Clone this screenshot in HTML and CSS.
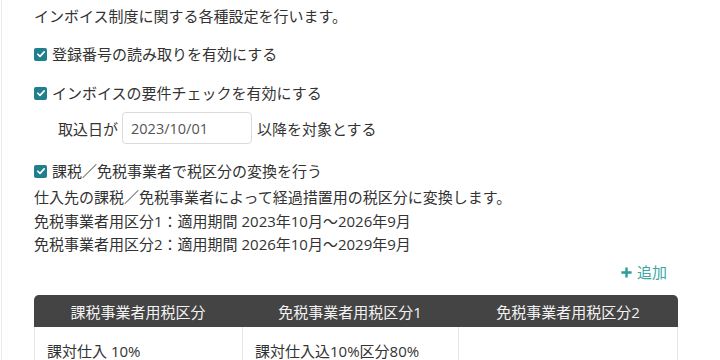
FILE: index.html
```html
<!DOCTYPE html>
<html lang="ja">
<head>
  <meta charset="UTF-8" />
  <meta name="viewport" content="width=device-width, initial-scale=1.0"/>
  <title>インボイス設定</title>
  <link rel="stylesheet" href="styles.css">
</head>
<body>
  <div class="panel">
    <p class="intro">インボイス制度に関する各種設定を行います。</p>

    <label class="check-row first">
      <span class="check"><svg viewBox="0 0 12 12" width="10" height="10"><path d="M2.2 6.3 L4.8 8.8 L9.8 3.4" fill="none" stroke="#fff" stroke-width="2" stroke-linecap="round" stroke-linejoin="round"/></svg></span>
      登録番号の読み取りを有効にする
    </label>

    <label class="check-row">
      <span class="check"><svg viewBox="0 0 12 12" width="10" height="10"><path d="M2.2 6.3 L4.8 8.8 L9.8 3.4" fill="none" stroke="#fff" stroke-width="2" stroke-linecap="round" stroke-linejoin="round"/></svg></span>
      インボイスの要件チェックを有効にする
    </label>

    <div class="date-row">
      <span>取込日が</span>
      <input class="date-input" type="text" value="2023/10/01">
      <span>以降を対象とする</span>
    </div>

    <label class="check-row convert">
      <span class="check"><svg viewBox="0 0 12 12" width="10" height="10"><path d="M2.2 6.3 L4.8 8.8 L9.8 3.4" fill="none" stroke="#fff" stroke-width="2" stroke-linecap="round" stroke-linejoin="round"/></svg></span>
      課税／免税事業者で税区分の変換を行う
    </label>
    <p class="desc">仕入先の課税／免税事業者によって経過措置用の税区分に変換します。</p>
    <p class="period first">免税事業者用区分1：適用期間 2023年10月～2026年9月</p>
    <p class="period">免税事業者用区分2：適用期間 2026年10月～2029年9月</p>

    <div class="add-row">
      <button class="add-btn"><svg viewBox="0 0 14 14" width="13" height="13"><path d="M7 1.5 V12.5 M1.5 7 H12.5" stroke="#2a9d9a" stroke-width="2.6"/></svg>追加</button>
    </div>

    <table class="tax-table">
      <thead>
        <tr>
          <th class="c1">課税事業者用税区分</th>
          <th class="c2">免税事業者用税区分1</th>
          <th class="c3">免税事業者用税区分2</th>
        </tr>
      </thead>
      <tbody>
        <tr>
          <td>課対仕入 10%</td>
          <td>課対仕入込10%区分80%</td>
          <td></td>
        </tr>
      </tbody>
    </table>
  </div>
</body>
</html>
```

FILE: styles.css
```css
body {
  margin: 0;
  background: #fff;
  color: #333;
  font-family: "Open Sans", "Noto Sans CJK JP", sans-serif;
  font-size: 15px;
}
.panel {
  border-left: 1px solid #ececec;
  margin-left: 1px;
  padding: 5px 0 0 32px;
  height: 355px;
  overflow: hidden;
}
p {
  margin: 0;
  line-height: 22px;
}
.check-row {
  display: flex;
  align-items: center;
  gap: 5px;
  line-height: 22px;
  margin-top: 17px;
}
.check-row.first {
  margin-top: 16px;
}
.check {
  width: 13px;
  height: 13px;
  border-radius: 2px;
  background: #1f7f8c;
  display: flex;
  align-items: center;
  justify-content: center;
}
.date-row {
  display: flex;
  align-items: center;
  gap: 5px;
  margin: 8px 0 0 24px;
}
.date-input {
  width: 130px;
  height: 32px;
  box-sizing: border-box;
  border: 1px solid #dcdcdc;
  border-radius: 4px;
  padding: 0 8px;
  font-family: inherit;
  font-size: 14.5px;
  color: #555;
  margin: 0 0 0 -1px;
}
.check-row.convert {
  margin-top: 16px;
}
.desc {
  margin-top: 4px;
}
.period.first {
  margin-top: 2px;
}
.period {
  margin-top: 1px;
}
.add-row {
  display: flex;
  justify-content: flex-end;
  padding-right: 53px;
  margin-top: 6px;
}
.add-btn {
  display: flex;
  align-items: center;
  gap: 4px;
  background: none;
  border: none;
  padding: 0;
  color: #3aa6a6;
  font-family: inherit;
  font-size: 15px;
  line-height: 22px;
  cursor: pointer;
}
.tax-table {
  width: 644px;
  margin-top: 12px;
  border-collapse: separate;
  border-spacing: 0;
}
.tax-table th {
  background: #444;
  color: #f2f2f2;
  font-weight: normal;
  height: 32px;
  padding: 0;
  text-align: center;
}
.tax-table th.c1 {
  width: 208px;
  border-top-left-radius: 5px;
}
.tax-table th.c2 {
  width: 216px;
}
.tax-table th.c3 {
  border-top-right-radius: 5px;
}
.tax-table td {
  height: 46px;
  padding: 0 12px;
  border-left: 1px solid #e6e6e6;
  vertical-align: middle;
}
.tax-table td:last-child {
  border-right: 1px solid #e6e6e6;
}
```
